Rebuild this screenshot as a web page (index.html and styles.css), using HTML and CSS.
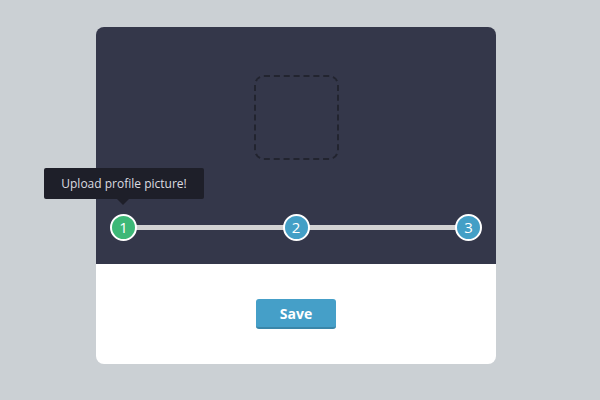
FILE: index.html
```html
<!DOCTYPE html>
<html>
<head>
<meta charset="utf-8">
<link rel="stylesheet" href="styles.css">
</head>
<body>
<div class="card">
  <div class="top">
    <div class="dropzone"></div>
    <div class="steps">
      <div class="track"></div>
      <div class="step done">1
        <div class="tooltip">Upload profile picture!</div>
      </div>
      <div class="step">2</div>
      <div class="step">3</div>
    </div>
  </div>
  <div class="bottom">
    <button class="save">Save</button>
  </div>
</div>
</body>
</html>
```
FILE: styles.css
```css
html, body { margin: 0; padding: 0; }
body {
  width: 600px;
  height: 400px;
  background: #cbd0d4;
  font-family: "Open Sans", "Liberation Sans", sans-serif;
  padding-top: 27px;
  box-sizing: border-box;
}
.card {
  width: 400px;
  margin-left: 96px;
  border-radius: 8px;
  overflow: visible;
}
.top {
  background: #34374a;
  height: 237px;
  border-radius: 8px 8px 0 0;
  position: relative;
  display: flex;
  flex-direction: column;
  align-items: center;
}
.dropzone {
  margin-top: 48px;
  width: 81px;
  height: 81px;
  border: 2px dashed #22242f;
  border-radius: 10px;
}
.steps {
  margin-top: 54px;
  width: 372px;
  height: 27px;
  position: relative;
  display: flex;
  justify-content: space-between;
  align-items: center;
}
.track {
  position: absolute;
  left: 10px;
  right: 10px;
  top: 11px;
  height: 5px;
  background: #d2d2d2;
}
.step {
  position: relative;
  width: 23px;
  height: 23px;
  border: 2px solid #fff;
  border-radius: 50%;
  background: #439fc6;
  color: #fff;
  font-size: 15px;
  line-height: 23px;
  text-align: center;
}
.step.done { background: #3db877; }
.tooltip {
  position: absolute;
  left: -68px;
  bottom: 40px;
  width: 160px;
  height: 31px;
  background: #1e1f29;
  color: #dcdce0;
  font-size: 12px;
  line-height: 31px;
  text-align: center;
  border-radius: 2px;
  white-space: nowrap;
}
.tooltip::after {
  content: "";
  position: absolute;
  left: 73px;
  top: 31px;
  border: 6px solid transparent;
  border-top-color: #1e1f29;
  border-bottom: 0;
}
.bottom {
  background: #fff;
  height: 100px;
  border-radius: 0 0 8px 8px;
  display: flex;
  justify-content: center;
}
.save {
  margin-top: 35px;
  width: 80px;
  height: 30px;
  background: #459fc8;
  border: 0;
  border-bottom: 2px solid #3a86a9;
  border-radius: 3px;
  color: #fff;
  font-family: "Open Sans", "Liberation Sans", sans-serif;
  font-weight: bold;
  font-size: 14px;
  padding: 0;
}
```
